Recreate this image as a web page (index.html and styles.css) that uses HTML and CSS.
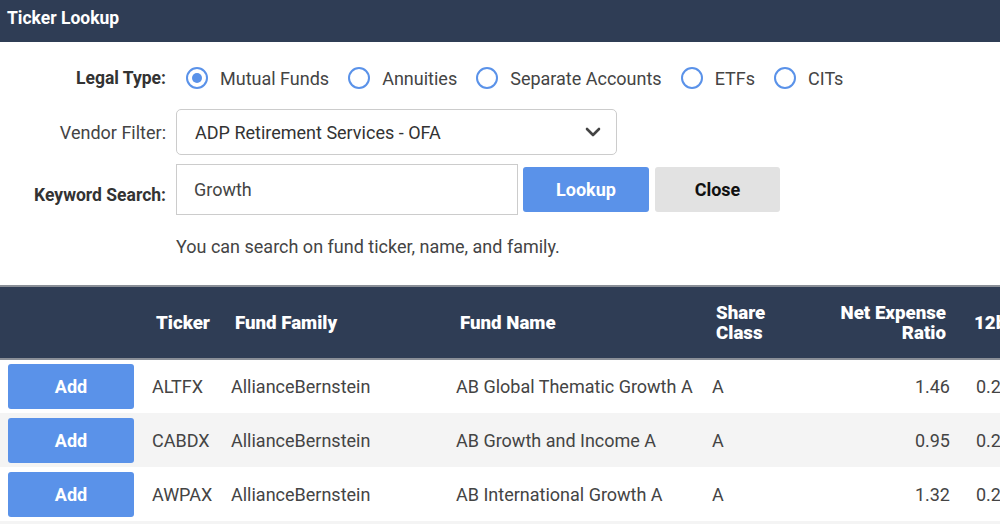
FILE: index.html
```html
<!DOCTYPE html>
<html lang="en">
<head>
  <meta charset="UTF-8">
  <title>Ticker Lookup</title>
  <link rel="stylesheet" href="styles.css">
</head>
<body>
  <header class="title-bar">Ticker Lookup</header>

  <section class="lookup-form">
    <div class="form-row radio-row">
      <div class="field-label">Legal Type:</div>
      <div class="radio-group">
        <label class="radio"><span class="dot checked"></span>Mutual Funds</label>
        <label class="radio"><span class="dot"></span>Annuities</label>
        <label class="radio"><span class="dot"></span>Separate Accounts</label>
        <label class="radio"><span class="dot"></span>ETFs</label>
        <label class="radio"><span class="dot"></span>CITs</label>
      </div>
    </div>

    <div class="form-row vendor-row">
      <div class="field-label normal">Vendor Filter:</div>
      <div class="select-box">
        <span>ADP Retirement Services - OFA</span>
        <svg width="16" height="10" viewBox="0 0 16 10"><path d="M2 2 L8 8 L14 2" fill="none" stroke="#444" stroke-width="2.6" stroke-linecap="round" stroke-linejoin="round"/></svg>
      </div>
    </div>

    <div class="form-row search-row">
      <div class="field-label keyword">Keyword Search:</div>
      <div class="text-input">Growth</div>
      <button class="btn btn-blue">Lookup</button>
      <button class="btn btn-gray">Close</button>
    </div>

    <p class="hint">You can search on fund ticker, name, and family.</p>
  </section>

  <table class="results">
    <colgroup>
      <col style="width:142px"><col style="width:79px"><col style="width:225px"><col style="width:256px"><col style="width:90px"><col style="width:168px"><col style="width:120px">
    </colgroup>
    <thead>
      <tr>
        <th></th>
        <th>Ticker</th>
        <th>Fund Family</th>
        <th>Fund Name</th>
        <th>Share<br>Class</th>
        <th class="num">Net Expense<br>Ratio</th>
        <th class="last">12b-1</th>
      </tr>
    </thead>
    <tbody>
      <tr>
        <td class="add-cell"><button class="btn btn-blue add">Add</button></td>
        <td>ALTFX</td><td>AllianceBernstein</td><td>AB Global Thematic Growth A</td><td>A</td><td class="num">1.46</td><td class="last">0.25</td>
      </tr>
      <tr>
        <td class="add-cell"><button class="btn btn-blue add">Add</button></td>
        <td>CABDX</td><td>AllianceBernstein</td><td>AB Growth and Income A</td><td>A</td><td class="num">0.95</td><td class="last">0.25</td>
      </tr>
      <tr>
        <td class="add-cell"><button class="btn btn-blue add">Add</button></td>
        <td>AWPAX</td><td>AllianceBernstein</td><td>AB International Growth A</td><td>A</td><td class="num">1.32</td><td class="last">0.25</td>
      </tr>
      <tr>
        <td class="add-cell"><button class="btn btn-blue add">Add</button></td>
        <td>APGAX</td><td>AllianceBernstein</td><td>AB Large Cap Growth A</td><td>A</td><td class="num">0.80</td><td class="last">0.25</td>
      </tr>
    </tbody>
  </table>
</body>
</html>
```

FILE: styles.css
```css
* {
  margin: 0;
  padding: 0;
  box-sizing: border-box;
}
body {
  font-family: Roboto, 'Liberation Sans', sans-serif;
  font-size: 18px;
  color: #444;
  background: #fff;
  overflow: hidden;
}
.title-bar {
  background: #2f3d55;
  color: #fff;
  font-weight: bold;
  font-size: 17.5px;
  height: 42px;
  padding: 8px 7px 0;
}
.lookup-form {
  height: 243px;
  padding-top: 19px;
}
.form-row {
  display: flex;
  align-items: center;
}
.field-label {
  width: 166px;
  margin-right: 10px;
  text-align: right;
  font-weight: bold;
  font-size: 17.5px;
  color: #333;
}
.field-label.normal {
  font-weight: normal;
  font-size: 18px;
  color: #444;
}
.field-label.keyword {
  padding-top: 10px;
}
.radio-row {
  height: 34px;
}
.radio-group {
  display: flex;
  align-items: center;
  margin-left: 10px;
}
.radio {
  display: flex;
  align-items: center;
  margin-right: 19px;
}
.dot {
  width: 22px;
  height: 22px;
  border: 2.5px solid #5a92e9;
  border-radius: 50%;
  margin-right: 12px;
  position: relative;
}
.dot.checked::after {
  content: "";
  position: absolute;
  left: 3.5px;
  top: 3.5px;
  width: 10px;
  height: 10px;
  border-radius: 50%;
  background: #5a92e9;
}
.vendor-row {
  margin-top: 14px;
}
.select-box {
  width: 441px;
  height: 46px;
  border: 1px solid #ccc;
  border-radius: 5px;
  display: flex;
  align-items: center;
  justify-content: space-between;
  padding: 0 15px 0 18px;
  color: #333;
}
.search-row {
  margin-top: 9px;
}
.text-input {
  width: 342px;
  height: 51px;
  border: 1px solid #ccc;
  padding: 0 17px;
  display: flex;
  align-items: center;
  color: #444;
}
.btn {
  font-family: inherit;
  font-size: 18px;
  font-weight: bold;
  border: none;
  border-radius: 3px;
  width: 126px;
  height: 45px;
}
.btn-blue {
  background: #5a92e9;
  color: #fff;
}
.btn-gray {
  background: #e2e2e2;
  color: #111;
}
.search-row .btn-blue {
  margin-left: 5px;
}
.search-row .btn-gray {
  margin-left: 6px;
  width: 125px;
}
.hint {
  margin: 21px 0 0 176px;
  color: #444;
}
.results {
  border-collapse: collapse;
  table-layout: fixed;
  width: 1080px;
}
.results thead tr {
  background: #2f3d55;
  border-top: 2px solid #8a8f97;
  border-bottom: 2px solid #8a8f97;
}
.results th {
  color: #fff;
  font-weight: 900;
  font-size: 18.7px;
  text-align: left;
  height: 73px;
  padding: 0 14px;
  line-height: 20px;
  vertical-align: middle;
  white-space: nowrap;
}
.results td {
  height: 54px;
  padding: 0 10px;
  white-space: nowrap;
}
.results .num {
  text-align: right;
}
.results td.last {
  padding-left: 16px;
}
.results tbody tr:nth-child(even) {
  background: #f4f4f4;
}
.results td.add-cell {
  padding: 0 0 0 8px;
}
```
